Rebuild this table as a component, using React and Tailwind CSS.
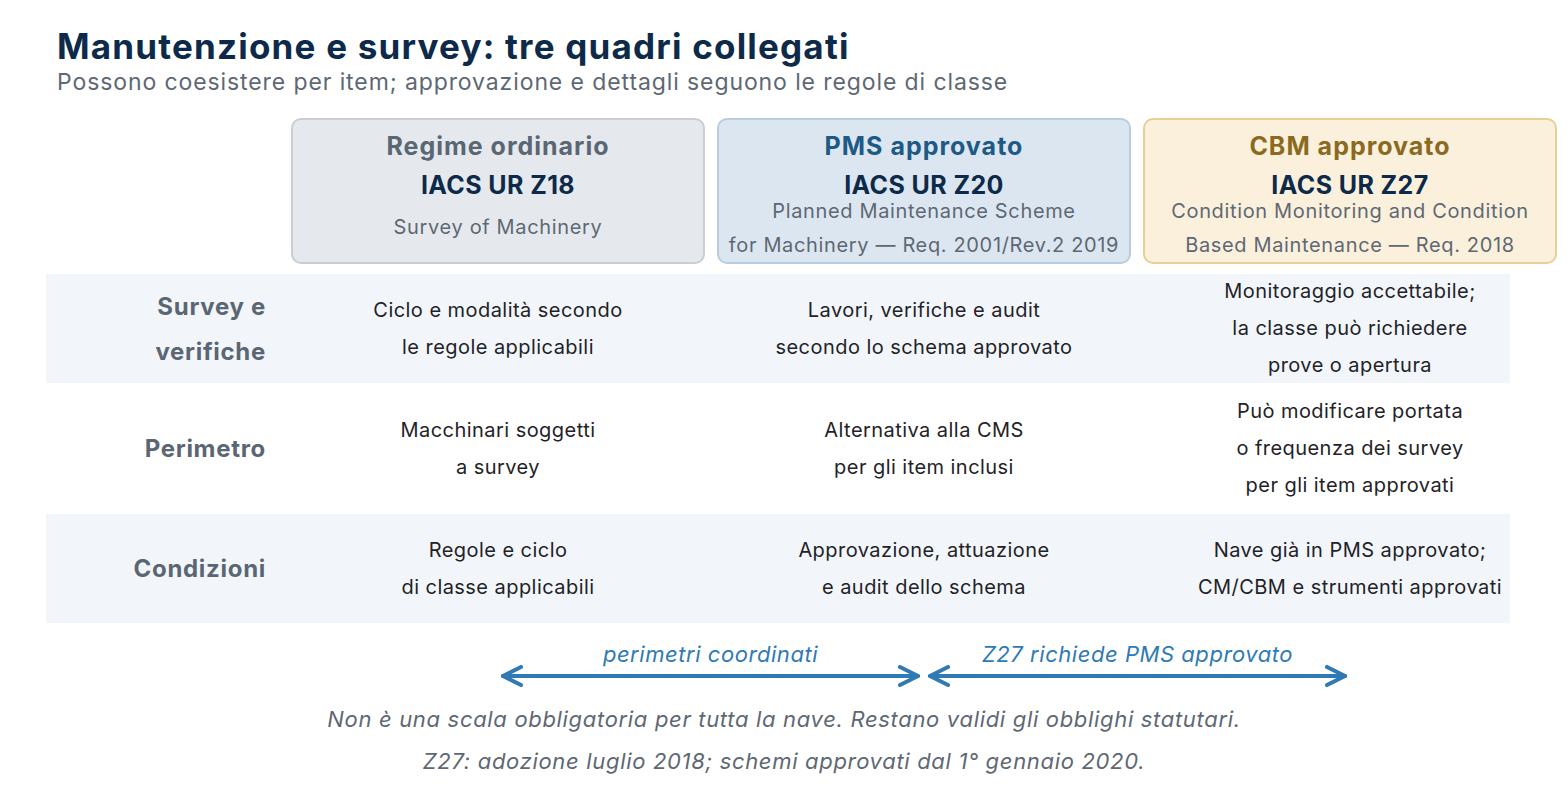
import React from "react";

const cards = [
  {
    title: "Regime ordinario",
    code: "IACS UR Z18",
    sub: ["Survey of Machinery"],
    box: "bg-[#e5e9ed] border-[#c9ced4]",
    titleColor: "text-[#5b6674]",
  },
  {
    title: "PMS approvato",
    code: "IACS UR Z20",
    sub: ["Planned Maintenance Scheme", "for Machinery — Req. 2001/Rev.2 2019"],
    box: "bg-[#dce6f0] border-[#b9cde0]",
    titleColor: "text-[#1d5a85]",
  },
  {
    title: "CBM approvato",
    code: "IACS UR Z27",
    sub: ["Condition Monitoring and Condition", "Based Maintenance — Req. 2018"],
    box: "bg-[#fbf0dc] border-[#e6d095]",
    titleColor: "text-[#8a6a1f]",
  },
];

const rows = [
  {
    label: ["Survey e", "verifiche"],
    h: "h-[109px]",
    bg: "bg-[#f2f6fa]",
    cells: [
      ["Ciclo e modalità secondo", "le regole applicabili"],
      ["Lavori, verifiche e audit", "secondo lo schema approvato"],
      ["Monitoraggio accettabile;", "la classe può richiedere", "prove o apertura"],
    ],
  },
  {
    label: ["Perimetro"],
    h: "h-[131px]",
    bg: "bg-white",
    cells: [
      ["Macchinari soggetti", "a survey"],
      ["Alternativa alla CMS", "per gli item inclusi"],
      ["Può modificare portata", "o frequenza dei survey", "per gli item approvati"],
    ],
  },
  {
    label: ["Condizioni"],
    h: "h-[109px]",
    bg: "bg-[#f2f6fa]",
    cells: [
      ["Regole e ciclo", "di classe applicabili"],
      ["Approvazione, attuazione", "e audit dello schema"],
      ["Nave già in PMS approvato;", "CM/CBM e strumenti approvati"],
    ],
  },
];

function Arrow() {
  return (
    <svg width="421" height="22" viewBox="0 0 421 22" className="block">
      <g fill="none" stroke="#2f7ab4" strokeWidth="4" strokeLinecap="round" strokeLinejoin="round">
        <line x1="3" y1="11" x2="418" y2="11" />
        <polyline points="21,2 3,11 21,20" />
        <polyline points="400,2 418,11 400,20" />
      </g>
    </svg>
  );
}

export default function App() {
  return (
    <div
      className="w-[1568px] h-[800px] bg-white overflow-hidden"
      style={{ fontFamily: "Inter, 'Noto Sans', sans-serif" }}
    >
      <div className="pl-[57px] pt-[24px]">
        <h1 className="text-[35px] leading-[44px] font-bold text-[#0e2a4a] tracking-[1.2px] whitespace-nowrap">
          Manutenzione e survey: tre quadri collegati
        </h1>
        <p className="text-[23px] leading-[30px] text-[#5e6874] -mt-[1px] tracking-[0.9px] whitespace-nowrap">
          Possono coesistere per item; approvazione e dettagli seguono le regole di classe
        </p>
      </div>

      <div className="flex gap-[12px] pl-[291px] mt-[21px]">
        {cards.map((c, i) => (
          <div
            key={i}
            className={`w-[414px] h-[146px] rounded-[10px] border-[2.5px] ${c.box} flex flex-col items-center pt-[8px]`}
          >
            <div className={`text-[25px] leading-[36px] font-bold tracking-[1px] whitespace-nowrap ${c.titleColor}`}>
              {c.title}
            </div>
            <div className="text-[25px] leading-[36px] font-bold text-[#0e2a4a] mt-[3px] tracking-[0.4px] whitespace-nowrap">
              {c.code}
            </div>
            <div className={`${c.sub.length === 1 ? "mt-[7px]" : "-mt-[9px]"} flex flex-col items-center`}>
              {c.sub.map((s, j) => (
                <div key={j} className="text-[20px] leading-[34px] text-[#5e6874] tracking-[0.65px] whitespace-nowrap">
                  {s}
                </div>
              ))}
            </div>
          </div>
        ))}
      </div>

      <div className="ml-[46px] mt-[10px] w-[1464px]">
        {rows.map((r, i) => (
          <div key={i} className={`${r.h} ${r.bg} flex items-center`}>
            <div className="w-[245px] shrink-0 pr-[25px] flex flex-col items-end">
              {r.label.map((l, j) => (
                <div key={j} className="text-[24px] leading-[45px] font-bold text-[#5b6674] tracking-[0.7px] whitespace-nowrap">
                  {l}
                </div>
              ))}
            </div>
            <div className="flex items-center gap-[12px] shrink-0">
              {r.cells.map((cell, k) => (
                <div key={k} className="w-[414px] shrink-0 flex flex-col items-center justify-center">
                  {cell.map((t, m) => (
                    <div key={m} className="text-[20px] leading-[37px] text-[#1f2328] tracking-[0.45px] whitespace-nowrap">
                      {t}
                    </div>
                  ))}
                </div>
              ))}
            </div>
          </div>
        ))}
      </div>

      <div className="flex gap-[6px] pl-[500px] mt-[16px]">
        {["perimetri coordinati", "Z27 richiede PMS approvato"].map((t, i) => (
          <div key={i} className="w-[421px] flex flex-col items-center">
            <div className="text-[22px] leading-[30px] italic text-[#2f7ab4] tracking-[0.55px] whitespace-nowrap">{t}</div>
            <div className="-mt-[4px]">
              <Arrow />
            </div>
          </div>
        ))}
      </div>

      <div className="mt-[11px] flex flex-col items-center">
        <div className="text-[22px] leading-[42px] italic text-[#5e6874] tracking-[0.68px] whitespace-nowrap">
          Non è una scala obbligatoria per tutta la nave. Restano validi gli obblighi statutari.
        </div>
        <div className="text-[22px] leading-[42px] italic text-[#5e6874] tracking-[0.68px] whitespace-nowrap">
          Z27: adozione luglio 2018; schemi approvati dal 1° gennaio 2020.
        </div>
      </div>
    </div>
  );
}
